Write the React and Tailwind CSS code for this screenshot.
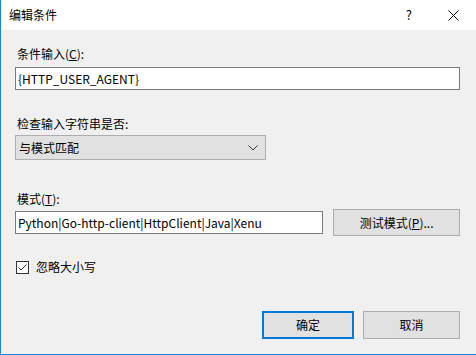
import React from "react";

const font = { fontFamily: '"Noto Sans CJK SC", "Noto Sans", sans-serif' };

export default function App() {
  return (
    <div
      className="w-[476px] h-[355px] bg-[#f0f0f0] border-l border-b border-[#1883d7] flex flex-col text-[12px] text-black overflow-hidden"
      style={font}
    >
      {/* Title bar */}
      <div className="h-[30px] bg-white flex items-center shrink-0">
        <span className="ml-[8px] text-[12px] leading-[16px]">编辑条件</span>
        <span className="ml-auto mr-[36px] text-[13px] leading-[16px]">?</span>
        <svg width="11" height="11" viewBox="0 0 11 11" className="mr-[17px]">
          <path d="M0.5 0.5 L10.5 10.5 M10.5 0.5 L0.5 10.5" stroke="#000" strokeWidth="1" />
        </svg>
      </div>

      <div className="flex flex-col pl-[14px] pr-[16px]">
        <div className="mt-[16px] ml-[2px] leading-[16px]">
          条件输入(<span className="underline">C</span>):
        </div>
        <div className="mt-[5px] h-[23px] w-[445px] bg-white border border-[#7a7a7a] flex items-center px-[2px] leading-[16px]">
          {"{HTTP_USER_AGENT}"}
        </div>

        <div className="mt-[26px] ml-[2px] leading-[16px]">检查输入字符串是否:</div>
        <div className="mt-[3px] h-[25px] w-[251px] bg-[#e1e1e1] border border-[#adadad] flex items-center px-[3px] leading-[16px]">
          <span>与模式匹配</span>
          <svg width="10" height="6" viewBox="0 0 10 6" className="ml-auto mr-[4px]">
            <path d="M0.5 0.5 L5 5 L9.5 0.5" stroke="#333" strokeWidth="1" fill="none" />
          </svg>
        </div>

        <div className="mt-[31px] ml-[2px] leading-[16px]">
          模式(<span className="underline">T</span>):
        </div>
        <div className="mt-[2px] flex items-center">
          <div className="h-[23px] w-[309px] bg-white border border-[#7a7a7a] flex items-center px-[2px] leading-[16px] whitespace-nowrap">
            Python|Go-http-client|HttpClient|Java|Xenu
          </div>
          <div className="ml-[10px] h-[27px] w-[127px] bg-[#e1e1e1] border border-[#adadad] flex items-center justify-center leading-[16px]">
            测试模式(<span className="underline">P</span>)...
          </div>
        </div>

        <div className="mt-[23px] ml-[1px] flex items-center">
          <div className="w-[13px] h-[13px] bg-white border border-[#333] flex items-center justify-center">
            <svg width="11" height="11" viewBox="0 0 11 11">
              <path d="M1.5 5.5 L4 8 L9.5 2.5" stroke="#222" strokeWidth="1" fill="none" />
            </svg>
          </div>
          <span className="ml-[7px] leading-[16px]">忽略大小写</span>
        </div>

        <div className="mt-[36px] flex justify-end">
          <div className="h-[28px] w-[92px] bg-[#e1e1e1] border-2 border-[#0078d7] flex items-center justify-center leading-[16px]">
            确定
          </div>
          <div className="ml-[9px] h-[28px] w-[97px] bg-[#e1e1e1] border border-[#adadad] flex items-center justify-center leading-[16px]">
            取消
          </div>
        </div>
      </div>
    </div>
  );
}
